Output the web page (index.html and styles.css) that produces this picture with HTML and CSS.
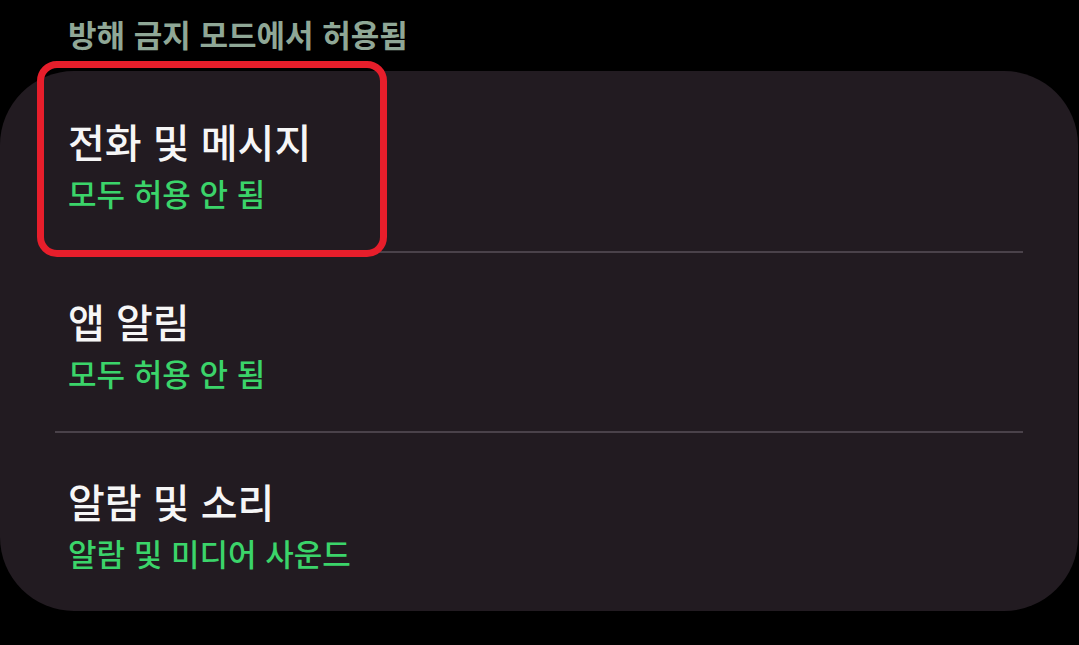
FILE: index.html
```html
<!DOCTYPE html>
<html lang="ko">
<head>
<meta charset="utf-8">
<title>방해 금지 모드에서 허용됨</title>
<link rel="stylesheet" href="styles.css">
</head>
<body>
<div class="screen">
  <div class="section-header">방해 금지 모드에서 허용됨</div>
  <div class="card">
    <div class="row">
      <div class="row-title">전화 및 메시지</div>
      <div class="row-sub">모두 허용 안 됨</div>
    </div>
    <div class="divider"></div>
    <div class="row">
      <div class="row-title">앱 알림</div>
      <div class="row-sub">모두 허용 안 됨</div>
    </div>
    <div class="divider"></div>
    <div class="row">
      <div class="row-title">알람 및 소리</div>
      <div class="row-sub">알람 및 미디어 사운드</div>
    </div>
  </div>
  <div class="highlight"></div>
</div>
</body>
</html>
```

FILE: styles.css
```css
html, body {
  margin: 0;
  padding: 0;
  background: #000000;
}

body {
  width: 1079px;
  height: 645px;
  overflow: hidden;
  font-family: "Noto Sans CJK KR", "Noto Sans", sans-serif;
}

.screen {
  position: relative;
  width: 1079px;
  height: 645px;
}

.section-header {
  height: 71px;
  padding-left: 68px;
  box-sizing: border-box;
  line-height: 68px;
  font-size: 31px;
  font-weight: 700;
  color: #8fa796;
}

.card {
  width: 1078px;
  background: #221b21;
  border-radius: 74px;
  display: flex;
  flex-direction: column;
}

.row {
  display: flex;
  flex-direction: column;
  padding: 46px 0 38px 68px;
}

.row:first-child {
  padding-top: 48px;
}

.row-title {
  font-size: 40px;
  line-height: 44px;
  font-weight: 500;
  color: #f6f6f6;
}

.row-sub {
  margin-top: 10px;
  font-size: 31px;
  line-height: 40px;
  font-weight: 500;
  color: #3bd46a;
}

.divider {
  height: 2px;
  margin: 0 55px;
  background: #4a424a;
}

.highlight {
  position: absolute;
  left: 37px;
  top: 61px;
  width: 350px;
  height: 196px;
  box-sizing: border-box;
  border: 7px solid #e71e2b;
  border-radius: 20px;
}
```
